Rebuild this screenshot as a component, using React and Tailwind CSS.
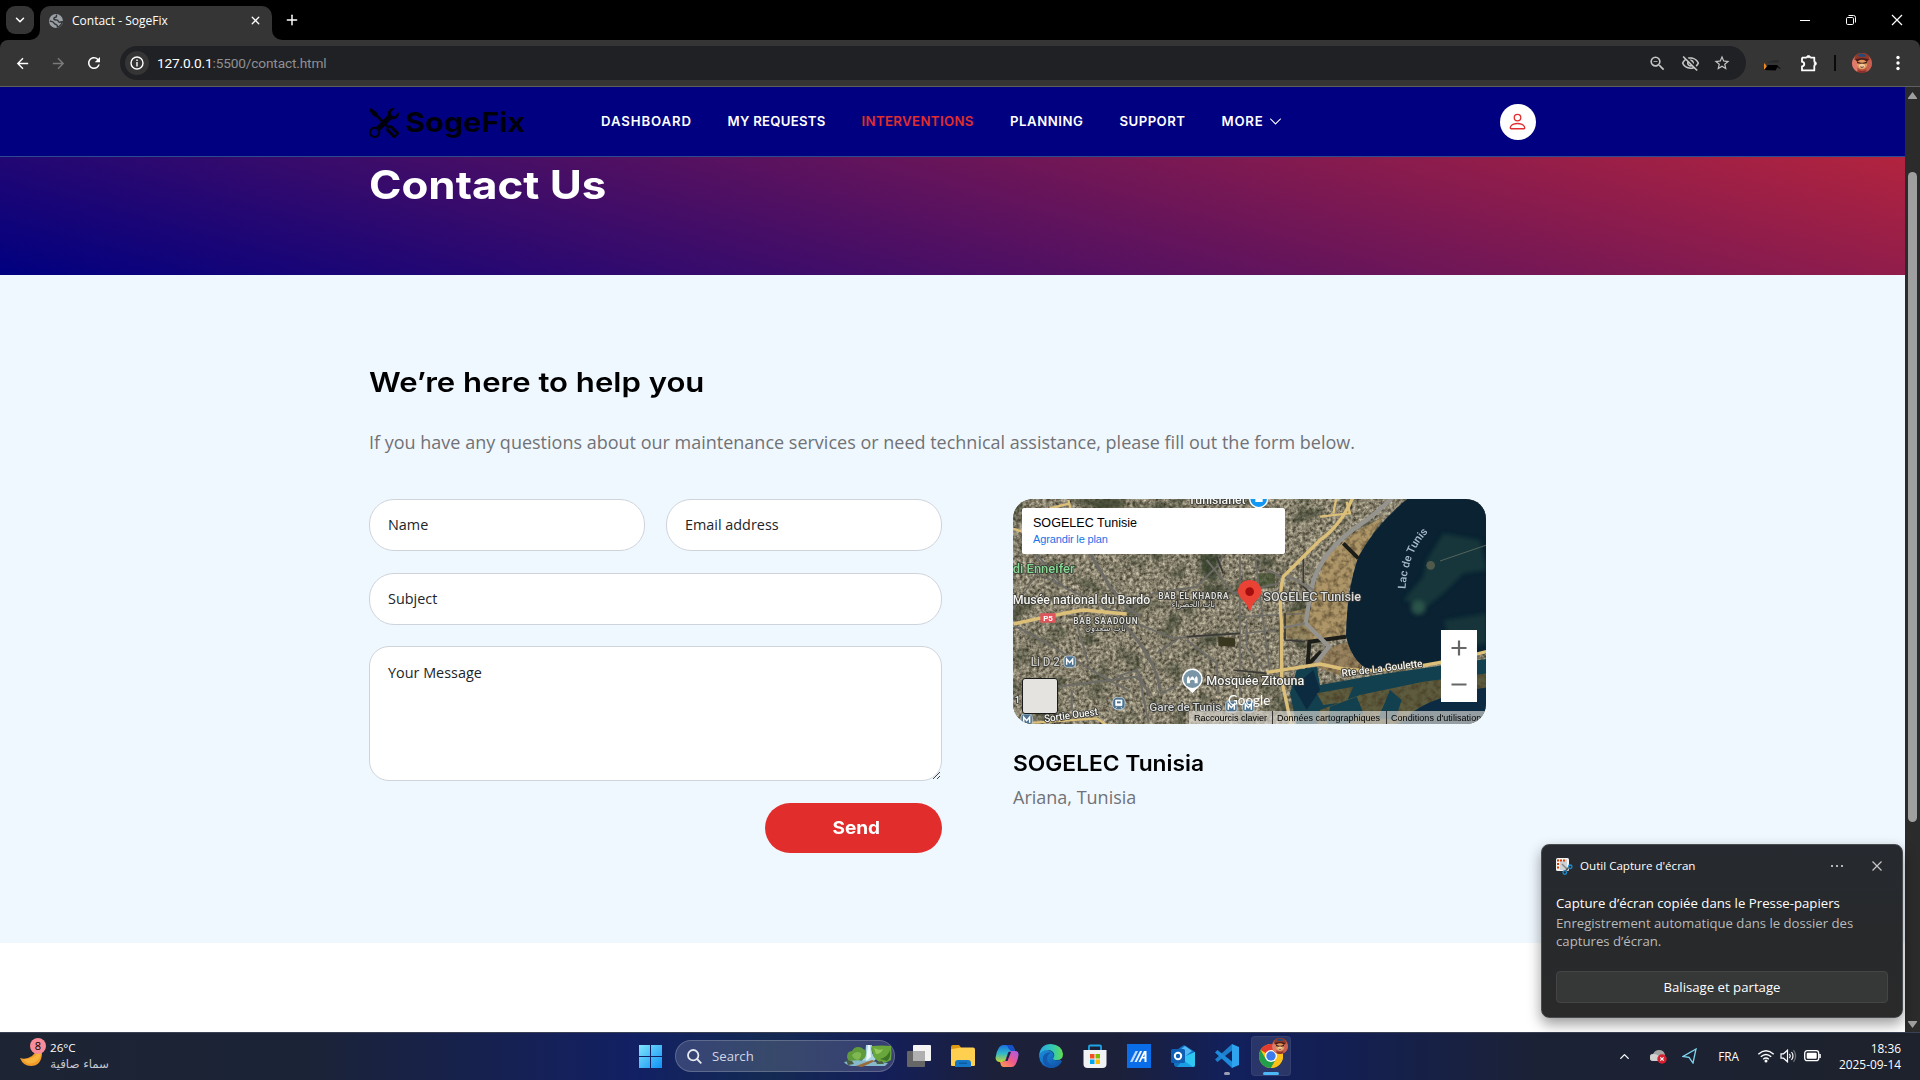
import React from "react";
import { MdArrowBack, MdArrowForward, MdRefresh, MdZoomOut, MdOutlineVisibilityOff, MdStarOutline } from "react-icons/md";
import { BsTools, BsPerson, BsChevronDown } from "react-icons/bs";
import { X, Plus, ChevronDown, ChevronUp } from "lucide-react";

function Monkey({ className }) {
  return (
    <svg className={className} viewBox="0 0 20 20">
      <circle cx="10" cy="10" r="10" fill="#b5513c" />
      <path d="M0 10a10 10 0 0 0 5 8.700L6 11 3 4A10 10 0 0 0 0 10z" fill="#e07a6c" />
      <path d="M20 10a10 10 0 0 1-5 8.700L14 12l3-8a10 10 0 0 1 3 6z" fill="#c9604f" />
      <path d="M4 1.800a10 10 0 0 1 12 0l2 5H2z" fill="#8f3a28" />
      <path d="M6 1.800l3-1.200 5 1.200-1 2H7z" fill="#274a7d" />
      <path d="M3 6.500q7-3 14 0l-2 2h-10z" fill="#4a1d18" />
      <ellipse cx="10" cy="11.500" rx="5.200" ry="4.800" fill="#e0985e" />
      <path d="M5 8.500l4 1.300h2L15 8.500v1.700l-3.500.6h-3L5 10.200z" fill="#46201a" />
      <ellipse cx="10" cy="13" rx="3" ry="2.300" fill="#f3cb9a" />
      <path d="M8.200 13.800q1.800 1.200 3.600 0" stroke="#5c2418" fill="none" strokeWidth=".9" />
      <path d="M6 17q4 2 8 0l-1 2.500q-3 .8-6 0z" fill="#8a2e2a" />
    </svg>
  );
}

function TitleBar() {
  return (
    <div className="flex h-10 items-start bg-black">
      <div className="ml-1.5 mt-1.5 flex h-7 w-7 items-center justify-center rounded-[9px] bg-[#353535]">
        <ChevronDown size={14} strokeWidth={2.6} className="text-white" />
      </div>
      <div className="relative ml-1.5 mt-1.5 flex h-[34px] w-[232px] items-center rounded-t-[10px] bg-[#353535] pb-[5px]">
        <svg className="absolute -left-2.5 bottom-0" width="10" height="10"><path d="M10 0v10H0A10 10 0 0 0 10 0z" fill="#353535" /></svg>
        <svg className="absolute -right-2.5 bottom-0" width="10" height="10"><path d="M0 0v10h10A10 10 0 0 1 0 0z" fill="#353535" /></svg>
        <svg className="ml-2" width="16" height="16" viewBox="0 0 16 16">
          <circle cx="8" cy="8" r="7" fill="#9aa0a6" />
          <path d="M8.800 1.800c-1 1 .4 1.600-.8 2.200-1.200.5-2.600.6-2.200 2 .3 1.100 2.600.8 3.600 1.200 1.100.5.700 2 2 2 1 0 1.800-.6 3-.4C13.500 12 11 14 9.400 14c0-1.200-.2-1.900-1-2.300-1-.6-2.400-.7-2.600-1.900C5.500 8.700 3.500 8.600 1.800 8" fill="none" stroke="#353535" strokeWidth="1.400" />
        </svg>
        <span className="ml-2 flex-1 whitespace-nowrap font-['Open_Sans',sans-serif] text-[12px] leading-4 text-white">Contact - SogeFix</span>
        <X size={13} strokeWidth={2.400} className="mr-2.5 text-white" />
      </div>
      <Plus size={16} strokeWidth={2.200} className="ml-3 mt-3 text-white" />
      <div className="ml-auto flex h-10 items-center">
        <div className="flex w-[46px] justify-center"><div className="h-px w-2.5 bg-white" /></div>
        <div className="flex w-[46px] justify-center">
          <svg width="12" height="12" viewBox="0 0 12 12" fill="none" stroke="#fff"><rect x="1.500" y="3.500" width="7" height="7" rx="1.200" /><path d="M3.500 1.500h5a2 2 0 0 1 2 2v5" /></svg>
        </div>
        <div className="flex w-[46px] justify-center">
          <svg width="12" height="12" viewBox="0 0 12 12" stroke="#fff" strokeWidth="1.200"><path d="M1 1l10 10M11 1L1 11" /></svg>
        </div>
      </div>
    </div>
  );
}

function Toolbar() {
  return (
    <div className="bg-black">
      <div className="flex h-[47px] items-center rounded-t-lg border-b border-[#5f5f5f] bg-[#353535]">
        <MdArrowBack size={17} className="ml-[14px] text-white" />
        <MdArrowForward size={17} className="ml-[19px] text-[#7b7b7b]" />
        <MdRefresh size={18} className="ml-[18px] text-white" />
        <div className="ml-[17px] flex h-[34px] w-[1626px] items-center rounded-full bg-[#202124]">
          <div className="ml-[5px] flex h-6 w-6 items-center justify-center rounded-full bg-[#353535]">
            <svg width="14" height="14" viewBox="0 0 14 14"><circle cx="7" cy="7" r="6" fill="none" stroke="#fff" strokeWidth="1.400" /><path d="M6.300 6h1.400v4.500H6.300zM6.300 3.500h1.400v1.500H6.300z" fill="#fff" /></svg>
          </div>
          <span className="ml-2 whitespace-nowrap font-['Roboto',sans-serif] text-[13.700px] leading-5 tracking-[-0.160px] text-white">127.0.0.1<span className="text-[#8f9094]">:5500/contact.html</span></span>
          <div className="ml-auto mr-[15px] flex items-center gap-[14px] text-[#c4c7c5]">
            <MdZoomOut size={19} />
            <MdOutlineVisibilityOff size={19} className="-mr-px" />
            <MdStarOutline size={18} />
          </div>
        </div>
        <svg className="ml-[18px] mt-1" width="17" height="12" viewBox="0 0 17 12"><path d="M0 11V4l1.500 1.500L3 8v3z" fill="#f28c1e" /><path d="M3 3l9-2 3 .5v2H4z" fill="#2a2a2a" /><path d="M0 11l4-5h9l4 4-1.500-.5L13.500 8l-2 3.500z" fill="#000" /></svg>
        <svg className="ml-[19px] mb-px text-white" width="18" height="18" viewBox="0 0 18 18" fill="none" stroke="currentColor" strokeWidth="1.800" strokeLinejoin="round">
          <path d="M2 3.600h4.700M10.300 3.600h4v4.200M14.300 11.200v5.200H2v-4.100a2.200 2.200 0 0 0 0-4.500V3.600" />
          <path d="M6.400 3.600a2.100 2.100 0 0 1 4.200 0z" fill="currentColor" strokeWidth=".8" />
          <path d="M14.300 7.400a2.100 2.100 0 0 1 0 4.200z" fill="currentColor" strokeWidth=".8" />
        </svg>
        <div className="ml-4 h-4 w-0.5 bg-[#0a0a0a]" />
        <Monkey className="ml-4 h-5 w-5" />
        <svg className="ml-6" width="4" height="16" viewBox="0 0 4 16" fill="#fff"><circle cx="2" cy="2.500" r="1.700" /><circle cx="2" cy="8" r="1.700" /><circle cx="2" cy="13.500" r="1.700" /></svg>
      </div>
    </div>
  );
}

function Header() {
  return (
    <header className="flex h-[70px] border-b border-[#2b4a90] bg-[#000080] pl-[369px] font-['Inter',sans-serif]">
      <div className="flex h-[69px] w-[232px]">
        <BsTools className="mt-[21px] h-[30px] w-[30px] text-[#00000c]" />
        <span className="ml-1.5 mt-[17px] inline-block h-9 origin-left scale-x-[1.110] whitespace-nowrap text-[27.500px] font-bold leading-9 text-[#00000c]">SogeFix</span>
      </div>
      <nav className="mt-6 flex h-5 gap-9 whitespace-nowrap text-[13.200px] font-semibold leading-5 text-white">
        <a className="w-[90.500px] tracking-[0.880px]">DASHBOARD</a>
        <a className="w-[98px] tracking-[0.260px]">MY REQUESTS</a>
        <a className="w-[112.500px] tracking-[0.380px] text-[#e22d2d]">INTERVENTIONS</a>
        <a className="w-[73.500px] tracking-[0.550px]">PLANNING</a>
        <a className="w-[66px] tracking-[0.450px]">SUPPORT</a>
        <a className="flex items-center tracking-[0.750px]">MORE<BsChevronDown className="ml-1.5 h-[13px] w-[13px]" strokeWidth={0.500} /></a>
      </nav>
      <div className="ml-auto mr-[369px] mt-[17px] flex h-9 w-9 items-center justify-center rounded-full bg-white">
        <BsPerson className="mb-0.5 mr-px h-[21px] w-[21px] text-[#e22d2d]" />
      </div>
    </header>
  );
}

const outline = { stroke: "#33332f", strokeWidth: 5, paintOrder: "stroke", strokeLinejoin: "round" };

function Metro({ x, y, s = 34 }) {
  return (
    <g transform={`translate(${x} ${y})`}>
      <rect x={-s / 2} y={-s / 2} width={s} height={s} rx="9" fill="#4d7391" stroke="#dce6ec" strokeWidth="2" />
      <path d="M-9 9V-8L0 3 9-8V9" fill="none" stroke="#fff" strokeWidth="4.500" />
    </g>
  );
}

function SatelliteMap() {
  return (
    <svg className="absolute inset-0" width="473" height="225" viewBox="0 0 473 225">
      <defs>
        <filter id="city" x="0" y="0" width="100%" height="100%" colorInterpolationFilters="sRGB">
          <feTurbulence type="fractalNoise" baseFrequency="0.3" numOctaves="3" seed="4" />
          <feColorMatrix values=".82 .1 0 0 .07  .8 .1 0 0 .055  .74 .1 0 0 .01  0 0 0 0 1" />
        </filter>
        <filter id="patch" x="0" y="0" width="100%" height="100%" colorInterpolationFilters="sRGB">
          <feTurbulence type="fractalNoise" baseFrequency="0.04" numOctaves="4" seed="11" />
          <feColorMatrix values="0 0 0 0 .2  0 0 0 0 .23  0 0 0 0 .16  3.200 0 0 0 -1.650" />
        </filter>
        <filter id="blur"><feGaussianBlur stdDeviation="7" /></filter>
        <filter id="grain" x="0" y="0" width="100%" height="100%" colorInterpolationFilters="sRGB">
          <feTurbulence type="fractalNoise" baseFrequency="0.06" numOctaves="3" seed="8" result="n" />
          <feColorMatrix in="n" values="0 0 0 0 .25  0 0 0 0 .2  0 0 0 0 .12  1.500 0 0 0 -.6" result="d" />
          <feComposite in="d" in2="SourceGraphic" operator="in" result="c" />
          <feMerge><feMergeNode in="SourceGraphic" /><feMergeNode in="c" /></feMerge>
        </filter>
      </defs>
      <rect width="473" height="225" filter="url(#city)" />
      <rect width="473" height="225" filter="url(#patch)" opacity=".7" />
      <g transform="translate(-13 -9) scale(.33333)" fontFamily="Roboto, sans-serif">
        <g filter="url(#grain)">
          <path d="M1060 130L1150 80 1075 200 1045 300 1038 440 930 455 925 390 945 290 980 200z" fill="#ae9668" />
          <path d="M850 370l75-15 5 95-70-5z" fill="#988962" />
          <path d="M985 475l60-20 60 80-60 30-115-40z" fill="#9a8460" />
        </g>
        <path d="M600 190l60 0-10 90-50-30z" fill="#2f3b28" opacity=".8" filter="url(#blur)" />
        <path d="M770 250h55v45h-55z" fill="#3c4a2b" opacity=".7" />
        <path d="M655 440l50 5v25l-50-3z" fill="#39371f" />
        <path d="M240 30l120-10 20 30-90 10z" fill="#39412b" opacity=".8" filter="url(#blur)" />
        <path d="M1230 20Q1130 100 1075 200 1040 300 1038 440 1060 530 1130 548L1470 490V20z" fill="#0a2232" />
        <g filter="url(#blur)" fill="#1f4540">
          <path d="M1330 130l110 20 20 90-70 10-60 60-50 40-70-20 60-70 10-50z" opacity=".6" />
          <circle cx="1255" cy="352" r="22" fill="#2c5348" />
          <path d="M1330 390l130-20v90l-100 20z" opacity=".5" />
        </g>
        <circle cx="1292" cy="226" r="13" fill="#5f6450" opacity=".8" />
        <path d="M1320 213l140-48" stroke="#55645a" strokeWidth="3" />
        <path d="M1075 205l-45-45M1038 440l-110 15-5 70 40-40" stroke="#1c1d18" strokeWidth="12" fill="none" />
        <path d="M870 610l20-70 60-10 10 55 170-30 340-50v200H890z" fill="#12404f" />
        <path d="M880 590l60-50 20 60-40 60z" fill="#0d2b40" />
        <g filter="url(#grain)"><path d="M950 610l110-20-20 45-70 10zM1080 615l190-40 190-25v60l-220 60-60 40H950l10-50z" fill="#5e5c3e" /></g>
        <path d="M1200 702q60-80 260-110v110z" fill="#0c2b42" />
        <path d="M990 650l80-30 20 50-60 40h-50zM1170 600l35 30-20 60-50-5z" fill="#12404f" />
        <g fill="none" stroke="#6d6b66" strokeWidth="6">
          <path d="M270 190l60 100 50 60 40 30" strokeWidth="9" />
          <path d="M40 405l110 60 150 90 90 50" />
          <path d="M370 400q100 110 110 200" strokeWidth="9" />
          <path d="M100 180l90 110 140 70 50 10 80-60 130-20 70-70 20-60" />
          <path d="M410 400l110 45 200-15M560 450l90 70 5 90M470 490l60-40" />
          <path d="M720 200v420M765 200l45 350M740 390v80l50 70M840 380v180" strokeWidth="5" />
          <path d="M620 210l80 100 140-30M800 240l70 30" />
          <path d="M170 590l240-30 40 50M215 600v60M415 545l30 150M230 400l35 120" />
          <path d="M350 560l60-20 40 80M480 610l50-20" />
          <path d="M60 140l120 150M40 360l70-110 80 40" strokeWidth="4" />
          <path d="M725 380l200-10M730 430l100-10" strokeWidth="4" />
        </g>
        <g fill="none" stroke="#3a3936" strokeWidth="5">
          <path d="M910 200v90l20 20v50M855 370v80l60 5" />
          <path d="M650 200l20 50M560 440l160-10M700 540l100 10" />
        </g>
        <path d="M1180 20q-60 60-110 90-110 80-135 180l-18 110 70 70-40 50" fill="none" stroke="#96948f" strokeWidth="13" />
        <path d="M915 400l-75 15M850 250l90 50" fill="none" stroke="#7b7a74" strokeWidth="7" />
        <g fill="none" stroke="#dcbf78" strokeWidth="10">
          <path d="M1060 20q-40 90-100 130l-110 110q-15 60-5 140v170l30 140" />
          <path d="M40 402q160-35 210-42l130 12" />
          <path d="M800 547l160-25 70 15q160 20 430-52" />
          <path d="M35 115l50 15M150 55l60-15M205 30l10 40M960 80l90-10-10-35M1000 70l10-50M70 700l220-15 60 40" strokeWidth="7" />
        </g>
        <path d="M749 20h54v6a27 27 0 0 1-54 0z" fill="#1297f5" stroke="#fff" strokeWidth="4" />
        <path d="M766 22h22v14h-22z" fill="#fff" />
        <g fill="#f6f6f3" fontWeight="500" {...outline}>
          <text x="565" y="42" fontSize="36" textLength="172" lengthAdjust="spacingAndGlyphs">Tunisianet</text>
          <text x="38" y="250" fontSize="36" fill="#86d993" textLength="186" lengthAdjust="spacingAndGlyphs">di Enneifer</text>
          <text x="38" y="343" fontSize="37" textLength="413" lengthAdjust="spacingAndGlyphs">Musée national du Bardo</text>
          <text x="475" y="326" fontSize="25" fontWeight="700" textLength="211" fill="#dddddb">BAB EL KHADRA</text>
          <text x="580" y="352" fontSize="25" textAnchor="middle" fontFamily="DejaVu Sans, sans-serif" fill="#dddddb">باب الخضراء</text>
          <text x="220" y="401" fontSize="25" fontWeight="700" textLength="193" fill="#dddddb">BAB SAADOUN</text>
          <text x="316" y="424" fontSize="25" textAnchor="middle" fontFamily="DejaVu Sans, sans-serif" fill="#dddddb">باب سعدون</text>
          <text x="92" y="528" fontSize="38" textLength="88" lengthAdjust="spacingAndGlyphs" fill="#c9c9c7">Li D 2</text>
          <text x="619" y="586" fontSize="37" textLength="294" lengthAdjust="spacingAndGlyphs">Mosquée Zitouna</text>
          <text x="448" y="662" fontSize="35" textLength="216" lengthAdjust="spacingAndGlyphs" fill="#d4d8db">Gare de Tunis</text>
          <text x="790" y="333" fontSize="36" textLength="293" lengthAdjust="spacingAndGlyphs" fill="#dedede">SOGELEC Tunisie</text>
          <text x="44" y="640" fontSize="28">1</text>
          <text transform="translate(134 697) rotate(-8)" fontSize="31" textLength="162" lengthAdjust="spacingAndGlyphs">Sortie Ouest</text>
          <text transform="translate(1026 560) rotate(-7)" fontSize="31" textLength="244" lengthAdjust="spacingAndGlyphs">Rte de La Goulette</text>
        </g>
        <path id="lake" d="M1217 297Q1222 190 1285 125" fill="none" />
        <text fontSize="33" fontWeight="500" fill="#a9bccb"><textPath href="#lake" textLength="188" lengthAdjust="spacingAndGlyphs">Lac de Tunis</textPath></text>
        <rect x="121" y="370" width="46" height="28" rx="3" fill="#e0555c" />
        <text x="144" y="393" fontSize="24" fontWeight="700" textAnchor="middle" fill="#fff">P5</text>
        <Metro x={209} y={515} />
        <Metro x={80} y={689} />
        <Metro x={694} y={650} />
        <Metro x={745} y={650} />
        <rect x="338" y="622" width="37" height="37" rx="14" fill="#4d7391" stroke="#dce6ec" strokeWidth="2" />
        <path d="M347 630h19v17h-19zM350 651l-4 6M363 651l4 6" fill="#fff" stroke="#fff" strokeWidth="2" />
        <path d="M351 634h11v6h-11z" fill="#4d7391" />
        <path d="M577 610l-18-18a31 31 0 1 1 36 0z" fill="#fff" />
        <circle cx="577" cy="567" r="27" fill="#7a96a6" />
        <path d="M561 580v-16l4-6 4 6v6q2-8 8-11 6 3 8 11v-6l4-6 4 6v16h-9v-8q-7-6-14 0v8z" fill="#fff" />
        <path d="M749 371q-3-22-18-38-17-15-17-29a35 34 0 0 1 70 0q0 14-17 29-15 16-18 38z" fill="#ea4335" />
        <circle cx="749" cy="305" r="13" fill="#a50e0e" />
        <text x="684" y="644" fontSize="38" textLength="127" lengthAdjust="spacingAndGlyphs" fill="#fff" fontFamily="Lato, sans-serif">Google</text>
      </g>
    </svg>
  );
}

function MapCard() {
  return (
    <div className="relative h-[225px] w-[473px] overflow-hidden rounded-[20px] bg-[#8f8a78] font-['Liberation_Sans',sans-serif]">
      <SatelliteMap />
      <div className="absolute left-[9px] top-[9px] h-[46px] w-[263px] rounded-[2px] bg-white pl-[11px] pt-1.5">
        <div className="origin-left scale-x-[0.930] text-[13.500px] leading-[18px] text-black">SOGELEC Tunisie</div>
        <div className="text-[11px] leading-[14px] tracking-[-0.140px] text-[#1a73e8]">Agrandir le plan</div>
      </div>
      <div className="absolute left-[9px] top-[179px] h-9 w-9 rounded-[3px] border border-[#1a1a1a] bg-[#e5e3df]" />
      <div className="absolute left-[428px] top-[131px] h-[72px] w-9 bg-white">
        <svg width="36" height="72" stroke="#666" strokeWidth="2.200"><path d="M10.500 18h15M18 10.500v15M10.500 54.500h15" /></svg>
      </div>
      <div className="absolute bottom-0 right-0 flex h-[13px] whitespace-nowrap bg-[#dedcd6]/65 text-[9px] leading-[14px] text-black">
        <span className="w-[84px] border-r border-[#333] pl-[5px]">Raccourcis clavier</span>
        <span className="w-[114px] border-r border-[#333] pl-1">Données cartographiques</span>
        <span className="w-[99px] pl-1 tracking-[0.040px]">Conditions d'utilisation</span>
      </div>
    </div>
  );
}

function Field({ label, className }) {
  return <div className={`flex h-[52px] items-center rounded-[25px] border border-[#ced4da] bg-white pl-[18px] ${className}`}>{label}</div>;
}

function ContactSection() {
  return (
    <main className="h-[668px] bg-[#f0f8ff] pl-[369px] pt-[88px]">
      <h2 className="h-10 whitespace-nowrap font-['Inter',sans-serif] text-[27px] font-semibold leading-10 text-black"><span className="inline-block origin-left scale-x-[1.152]">We’re here to help you</span></h2>
      <p className="mt-[25px] h-7 whitespace-nowrap font-['Open_Sans',sans-serif] text-[18px] leading-7 text-[#717275]">If you have any questions about our maintenance services or need technical assistance, please fill out the form below.</p>
      <div className="mt-[43px] flex gap-[71px]">
        <form className="w-[573px] font-['Open_Sans',sans-serif] text-[14.400px] leading-5 text-[#212529]">
          <div className="flex gap-[21px]">
            <Field label="Name" className="w-[276px]" />
            <Field label="Email address" className="w-[276px]" />
          </div>
          <Field label="Subject" className="mt-[22px]" />
          <div className="relative mt-[21px] h-[135px] rounded-[20px] border border-[#ced4da] bg-white pl-[18px] pt-4">
            Your Message
            <svg className="absolute bottom-0 right-0" width="9" height="9" stroke="#444"><path d="M1 8l7-7M5 8l3-3" /></svg>
          </div>
          <div className="ml-auto mt-[22px] flex h-[50px] w-[177px] items-center justify-center rounded-[25px] bg-[#e22d2d] pl-1.5 font-['Inter',sans-serif] text-[17.800px] font-bold text-white"><span className="inline-block scale-x-[1.070]">Send</span></div>
        </form>
        <div>
          <MapCard />
          <h4 className="mt-[25px] h-7 whitespace-nowrap font-['Inter',sans-serif] text-[21.300px] font-semibold leading-7 text-black"><span className="inline-block origin-left scale-x-[1.069]">SOGELEC Tunisia</span></h4>
          <p className="mt-1.5 font-['Open_Sans',sans-serif] text-[18px] leading-7 text-[#717275]">Ariana, Tunisia</p>
        </div>
      </div>
    </main>
  );
}

function Scrollbar() {
  return (
    <div className="flex h-[945px] w-[15px] flex-col items-center bg-[#2b2b2b]">
      <svg className="mt-[5px]" width="9" height="7"><path d="M4.500 0L9 6v1H0V6z" fill="#9f9f9f" /></svg>
      <div className="mt-[73px] h-[650px] w-[9px] rounded-full bg-[#9f9f9f]" />
      <svg className="mb-1 mt-auto" width="9" height="7"><path d="M4.500 7L9 1V0H0v1z" fill="#9f9f9f" /></svg>
    </div>
  );
}

function Toast() {
  return (
    <div className="absolute left-[1541px] top-[844px] h-[174px] w-[362px] rounded-lg border border-[#4a4d50] bg-gradient-to-b from-[#262a30] via-[#27292b] to-[#2a2a2a] px-[14px] font-['Open_Sans',sans-serif] text-[13.200px] text-white shadow-[0_6px_14px_rgba(0,0,0,0.4)]">
      <div className="mt-[11px] flex h-5 items-center">
        <svg width="17" height="17" viewBox="0 0 17 17">
          <rect width="13" height="13" rx="1.500" fill="#f4f4f4" />
          <path d="M4 4l7-3v11H4z" fill="#cfd2d5" />
          <path d="M1 1.500h2v2H1zM4 1.500h2v2H4zM7 1.500h2v2H7zM1 5h2v2H1zM1 8.500h2v2H1z" fill="#d83b01" />
          <path d="M6 6l6 6" stroke="#888" strokeWidth="1.500" />
          <circle cx="14.200" cy="8.800" r="1.800" fill="none" stroke="#1b8fd6" strokeWidth="1.300" />
          <circle cx="8.800" cy="14.500" r="1.800" fill="none" stroke="#1b8fd6" strokeWidth="1.300" />
          <path d="M12.500 9.500l-3 3.500" stroke="#555" strokeWidth="1.500" />
        </svg>
        <span className="ml-[7px] whitespace-nowrap text-[11.600px]">Outil Capture d'écran</span>
        <svg className="ml-auto" width="12" height="2" fill="#b5b5b5"><path d="M0 0h2v2H0zM5 0h2v2H5zM10 0h2v2h-2z" /></svg>
        <svg className="ml-7 mr-[5px]" width="12" height="12" stroke="#c8c8c8" strokeWidth="1.200"><path d="M1.500 1.500l9 9M10.500 1.500l-9 9" /></svg>
      </div>
      <div className="mt-[17px] whitespace-nowrap leading-5 tracking-[0.020px]">Capture d’écran copiée dans le Presse-papiers</div>
      <div className="whitespace-nowrap leading-[18px] text-[#b9babb]">
        <div className="mt-px tracking-[-0.020px]">Enregistrement automatique dans le dossier des</div>
        <div>captures d’écran.</div>
      </div>
      <div className="mt-[21px] flex h-8 items-center justify-center rounded-[4px] border border-[#454545] bg-[#363737] pt-px">Balisage et partage</div>
    </div>
  );
}

function Slot({ children }) {
  return <div className="flex h-12 w-11 items-center justify-center">{children}</div>;
}

function TaskIcons() {
  return (
    <div className="flex items-center">
      <Slot><svg width="24" height="22" viewBox="0 0 24 22"><rect y="6" width="18" height="16" rx="1" fill="#666" /><rect x="6" width="18" height="16" rx="1" fill="#f4f4f4" /><path d="M6 6h12v10H6z" fill="#b0b0b0" /></svg></Slot>
      <Slot><svg width="24" height="22" viewBox="0 0 24 22"><path d="M0 2q0-2 2-2h6l2 2.500V8H0z" fill="#e09a12" /><path d="M0 5q0-1 1-1l9-1.500h12q2 0 2 2V20q0 1-1 1H1q-1 0-1-1z" fill="#ffd04f" /><path d="M4 22v-4q0-3 3-3h10q3 0 3 3v4z" fill="#1577c8" /><path d="M8 17.500h8v1.500H8z" fill="#0d5aa0" /></svg></Slot>
      <Slot>
        <svg width="24" height="22" viewBox="0 0 24 22">
          <defs>
            <linearGradient id="cpA" x1="0" y1="0" x2="0" y2="1"><stop stopColor="#1a6fe0" /><stop offset=".5" stopColor="#31b8c8" /><stop offset="1" stopColor="#c6d332" /></linearGradient>
            <linearGradient id="cpB" x1="1" y1="0" x2="0" y2="1"><stop stopColor="#a45bf0" /><stop offset=".5" stopColor="#f0598a" /><stop offset="1" stopColor="#ffa24a" /></linearGradient>
          </defs>
          <path d="M8 0h8q2 0 3 3l1 3h-4q-2 0-3 2l-2 6q-1 3-4 3H4q-3-.5-3.500-4Q1 7 4 2.500 5.500 0 8 0z" fill="url(#cpA)" />
          <path d="M16 0q2 0 3 3l1 3h-4l-3-3q0-3-3-3z" fill="#1650c8" />
          <path d="M20 6q4 0 3.500 4-.5 5-3 9.500-1.500 2.500-4 2.500H9q-3 0-3.500-3.500L5 17h2q3 0 4-3l2-6q1-2 3-2z" fill="url(#cpB)" />
          <path d="M13.500 7L10.500 16h2L16 7z" fill="#14204f" />
        </svg>
      </Slot>
      <Slot>
        <svg width="24" height="24" viewBox="0 0 24 24">
          <defs>
            <linearGradient id="edA" x1="0" y1=".3" x2="1" y2=".3"><stop stopColor="#2aa6e8" /><stop offset=".6" stopColor="#35c9b0" /><stop offset="1" stopColor="#63dd4d" /></linearGradient>
            <linearGradient id="edB" x1="0" y1="0" x2="1" y2="1"><stop stopColor="#1b8fdc" /><stop offset="1" stopColor="#0f4fa5" /></linearGradient>
          </defs>
          <path d="M0 12Q2 5 9 6q6 1.500 6 6-1 2-1 3 2 2 7 1l2 1Q20 24 12 24 1 23 0 12z" fill="url(#edB)" />
          <path d="M9 11q-3 6 3 10 5 2 10-3-4 6-11 6Q3 22 4 13q2-5 8-4.500z" fill="#1259b0" />
          <path d="M0 12Q1 0 12 0q11 1 12 10 0 6-6 6-4 0-4-1.500 2-2 1-5Q13 6 9 6 2 6 0 12z" fill="url(#edA)" />
        </svg>
      </Slot>
      <Slot><svg width="24" height="24" viewBox="0 0 24 24"><path d="M6 7V2.500Q6 1.500 7 1.500h10q1 0 1 1V7" fill="none" stroke="#1fa4e6" strokeWidth="1.800" /><path d="M0.500 6h23v14q0 4-4 4h-15q-4 0-4-4z" fill="#f1f2f4" /><path d="M7 10h4.500v4.500H7z" fill="#f25022" /><path d="M12.500 10H17v4.500h-4.500z" fill="#7fba00" /><path d="M7 15.500h4.500V20H7z" fill="#00a4ef" /><path d="M12.500 15.500H17V20h-4.500z" fill="#ffb900" /></svg></Slot>
      <Slot><svg width="24" height="24" viewBox="0 0 24 24"><rect width="24" height="24" fill="#0a6ee8" /><path d="M3 18L8.500 7H11L5.500 18z" fill="#bcd8ff" /><path d="M7.500 18L13 7h2.200L9.700 18z" fill="#eaf3ff" /><path d="M11.500 18L17 7h2.500v11h-2v-3.500h-2.300L13.500 18zM16 13h1.500v-3z" fill="#fff" fillRule="evenodd" /></svg></Slot>
      <Slot><svg width="24" height="24" viewBox="0 0 24 24"><path d="M3 8l9-6.500q1-.5 2 0l10 6.500v13q0 2-2 2H6q-3 0-3-3z" fill="#1273c4" /><path d="M9 6l5-4 7 5-9 7z" fill="#52b9f5" /><path d="M12 13L24 8v13q0 2-2 2H9z" fill="#2fc7f2" /><path d="M6 23h16L12 16z" fill="#1b9de4" /><rect y="5" width="14" height="14" rx="1.500" fill="#0f5fb5" /><circle cx="7" cy="12" r="3.200" fill="none" stroke="#fff" strokeWidth="2" /></svg></Slot>
      <div className="relative"><Slot><svg width="24" height="24" viewBox="0 0 24 24"><path d="M17 6v12l-8-6z" fill="none" /><path d="M17 0l7 3v18l-7 3z" fill="#2ea3ee" /><path d="M17 0v6.500L2.500 18 0 15.500z" fill="#1b7fcc" /><path d="M17 24v-6.500L2.500 6 0 8.500z" fill="#1d8bdc" /></svg></Slot><div className="absolute bottom-[5px] left-[19px] h-[3px] w-1.5 rounded-full bg-[#9a9fb4]" /></div>
      <div className="relative"><div className="mx-0.5 flex h-10 w-10 items-center justify-center rounded-[4px] border border-white/5 bg-white/10">
        <svg width="24" height="24" viewBox="0 0 24 24"><circle cx="12" cy="12" r="12" fill="#fbc116" /><path d="M12 12L1.600 6A12 12 0 0 1 22.400 6H12z" fill="#e33b2e" /><path d="M1.600 6A12 12 0 0 0 12 24l5.200-9L12 12 6.800 15z" fill="#229f49" /><path d="M12 6h10.400A12 12 0 0 1 12 24l5.200-9z" fill="#fbc116" /><circle cx="12" cy="12" r="6" fill="#fff" /><circle cx="12" cy="12" r="4.700" fill="#3b7bed" /></svg>
      </div><Monkey className="absolute left-[23px] top-[2px] h-4 w-4" /><div className="absolute bottom-px left-[14px] h-[3px] w-4 rounded-full bg-[#4cb8f5]" /></div>
    </div>
  );
}

function Taskbar() {
  return (
    <footer className="flex h-12 items-center border-t border-[#3a4154] bg-[linear-gradient(90deg,#1d2433_0%,#1b2337_16%,#122064_33%,#142a52_40%,#141f5a_46%,#1c2038_52%,#1c2038_58%,#12205c_64%,#131f52_70%,#1b2236_80%,#1e222c_100%)] pb-px font-['Open_Sans',sans-serif] text-[12px] leading-4 text-white">
      <div className="relative ml-5 h-8 w-[30px]">
        <svg width="28" height="32" viewBox="0 0 28 32"><path d="M0 18q6 2 12-2 6-5 5-11 5 3 5 9-1 12-11 12-8 0-11-8z" fill="#f09a2a" /><path d="M3 19q8 1 13-4 3-4 3-8 4 6 0 12-6 6-12 4-3-2-4-4z" fill="#f8b33c" /></svg>
        <div className="absolute -top-0.5 left-2.5 flex h-4 w-4 items-center justify-center rounded-full bg-[#f98c98] text-[11px] text-black">8</div>
      </div>
      <div className="w-[589px]"><div className="text-[11.600px]">26°C</div><div dir="rtl" className="w-[59px] whitespace-nowrap font-['DejaVu_Sans',sans-serif] text-[11.800px] text-[#c6c9d0]">سماء صافية</div></div>
      <svg width="23" height="23" viewBox="0 0 23 23"><defs><linearGradient id="wn" x1="0" y1="0" x2="1" y2="1"><stop stopColor="#7fe6fd" /><stop offset="1" stopColor="#0f90f5" /></linearGradient></defs><path d="M0 0h11v11H0zM12 0h11v11H12zM0 12h11v11H0zM12 12h11v11H12z" fill="url(#wn)" /></svg>
      <div className="ml-[13px] flex h-8 w-[220px] items-center rounded-full border border-white/20 bg-white/15 pl-[11px]">
        <svg width="15" height="15" fill="none" stroke="#e6e8f0" strokeWidth="1.800"><circle cx="6.200" cy="6.200" r="5.200" /><path d="M10 10l4.300 4.300" /></svg>
        <span className="ml-2.5 text-[13.200px] text-[#d2d6e4]">Search</span>
        <svg className="ml-auto mr-0.5" width="48" height="22" viewBox="0 0 48 22">
          <path d="M22 0h6q-2 8 4 14l-6 6H14q8-6 8-20z" fill="#a9d4e4" />
          <path d="M24 0h2l1 12-5 4z" fill="#eaf7fb" />
          <path d="M3 12q0-6 5-6 2-4 6-4 4 0 5 2 4 1 3 5 0 5-5 6L8 19q-4-2-5-7z" fill="#5f9a3c" />
          <path d="M8 10q4-5 9-2 1 4-3 7-5-1-6-5z" fill="#7fb851" />
          <path d="M28 1q10-1 19 0 1 6 0 14-6 4-12 2-8-5-7-16z" fill="#69a63c" />
          <path d="M36 14q8-2 10-9 1 8-3 11z" fill="#3d7426" />
          <path d="M30 3q6 3 9 1-2 5-7 5z" fill="#93c95c" />
          <path d="M0 17q10-3 24-1l20 2-3 3H8q-6-1-8-4z" fill="#86b9c9" />
          <path d="M12 21l16-6 3 1-13 6z" fill="#9a6a3c" />
          <path d="M2 15l6 1 2 3-6 1zM32 17l6-1 2 3h-7z" fill="#4c5f44" />
        </svg>
      </div>
      <div className="ml-0.5"><TaskIcons /></div>
      <div className="ml-auto mr-[19px] flex h-12 items-center">
        <ChevronUp size={15} strokeWidth={2.200} />
        <svg className="ml-[18px]" width="17" height="16" viewBox="0 0 17 16"><path d="M3 13a3.500 3.500 0 0 1 0-7q2-4 6-4 5 0 6 5l-4 6z" fill="#a5a5a5" /><path d="M3 13a3.500 3.500 0 0 1 1-7q4 0 6 4v3z" fill="#d0d0d0" /><circle cx="12" cy="11" r="4.700" fill="#d5202f" /><path d="M10.300 9.300l3.400 3.400M13.700 9.300l-3.400 3.400" stroke="#fff" strokeWidth="1.200" /></svg>
        <svg className="ml-[15px]" width="15" height="16" viewBox="0 0 15 16" fill="none" stroke="#7fd7f0" strokeWidth="1.300"><path d="M14 1L1 8.500l6 .8 4 5.700z" /></svg>
        <span className="ml-[21px] text-[11.800px]">FRA</span>
        <svg className="ml-[18px]" width="18" height="14" viewBox="0 0 18 14" fill="none" stroke="#fff" strokeWidth="1.400"><path d="M1.300 5.200q7.700-7 15.400 0M3.800 7.800q5.200-4.600 10.400 0M6.200 10.200q2.800-2.400 5.600 0" /><circle cx="9" cy="12" r=".8" fill="#fff" /></svg>
        <svg className="ml-[5px]" width="18" height="14" viewBox="0 0 18 14" fill="none" stroke="#fff" strokeWidth="1.200"><path d="M1 4.800h2.500L7.500 1.200v11.600L3.500 9.200H1z" /><path d="M9.500 4.800q1.600 2.200 0 4.400M11.500 3q3 4 0 8" /><path d="M13.500 1.200q4.200 5.800 0 11.600" stroke="#6d727c" /></svg>
        <svg className="ml-[6px]" width="18" height="12" viewBox="0 0 18 12"><rect x=".7" y=".7" width="14" height="10" rx="2.500" fill="none" stroke="#fff" strokeWidth="1.300" /><rect x="2.700" y="2.700" width="10" height="6" rx="1" fill="#fff" /><path d="M16 4v4" stroke="#fff" strokeWidth="1.600" /></svg>
        <div className="w-[79px] text-right text-[11.900px]"><div>18:36</div><div>2025-09-14</div></div>
      </div>
    </footer>
  );
}

export default function App() {
  return (
    <div className="relative h-[1080px] w-[1920px] overflow-hidden bg-white">
      <TitleBar />
      <Toolbar />
      <div className="flex h-[945px]">
        <div className="w-[1905px] bg-white">
          <Header />
          <section className="h-[118px] bg-[linear-gradient(15deg,#000080_0%,#e22d2d_100%)] bg-[length:100%_285px] bg-bottom pl-[369px] pt-1">
            <h1 className="h-12 font-['Inter',sans-serif] text-[39px] font-bold leading-[48px] text-white"><span className="inline-block origin-left scale-x-[1.125]">Contact Us</span></h1>
          </section>
          <ContactSection />
        </div>
        <Scrollbar />
      </div>
      <Taskbar />
      <Toast />
    </div>
  );
}
